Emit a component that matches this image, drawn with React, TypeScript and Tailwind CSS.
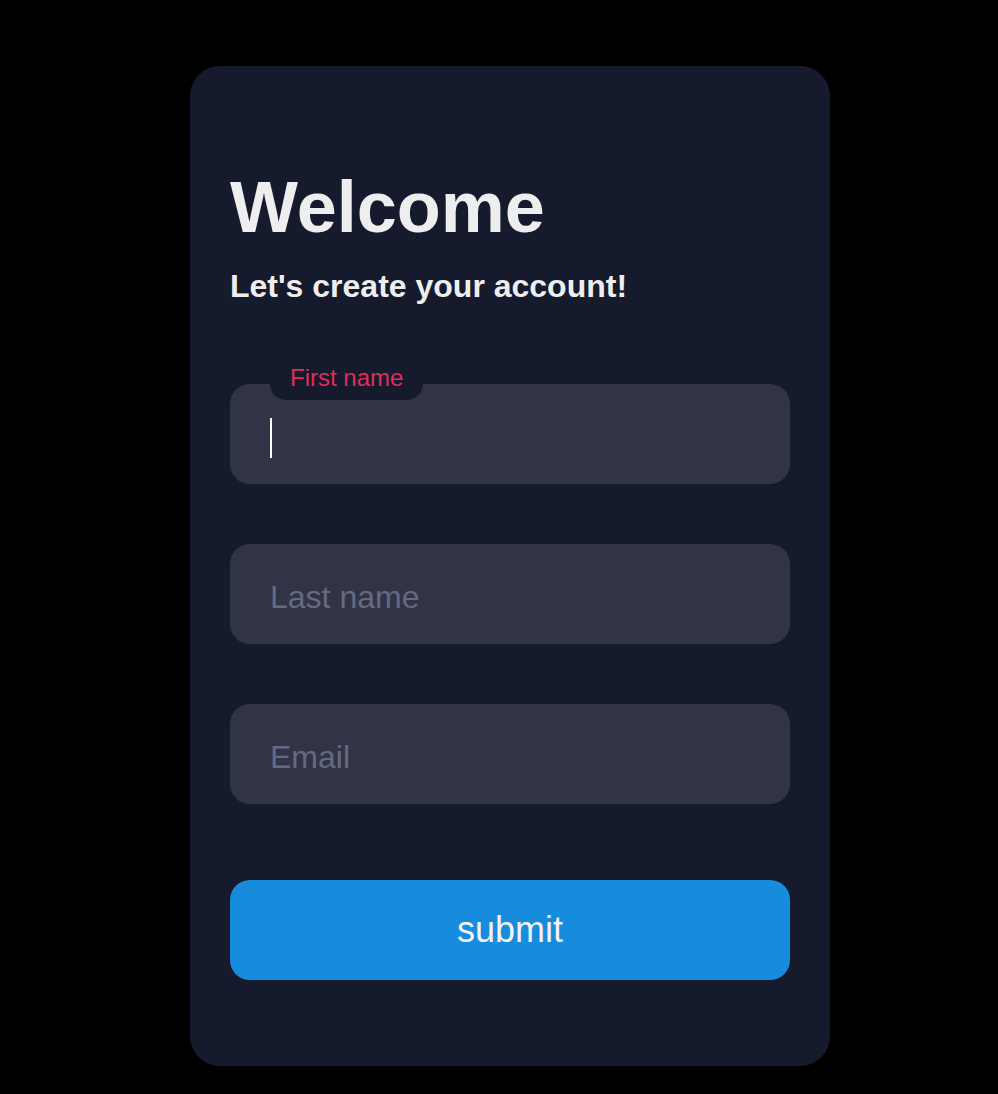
const fields = ["First name", "Last name", "Email"];

const Field = ({ label, active }: { label: string; active?: boolean }) => {
  return (
    <div className="relative h-[100px] w-full rounded-[20px] bg-[#313347]">
      {active && (
        <span className="absolute left-[40px] top-[-28px] rounded-[16px] bg-[#161a2d] px-5 py-2 text-[24px] leading-[28px] text-[#dc2f59]">
          {label}
        </span>
      )}
      <input
        className="h-full w-full bg-transparent px-10 pt-[6px] text-[32px] text-white outline-none placeholder:text-[#666981]"
        placeholder={active ? "" : label}
      />
      {active && <span className="absolute left-[40px] top-[34px] h-[40px] w-[2px] bg-white" />}
    </div>
  );
};

export default function App() {
  return (
    <div className="min-h-[1094px] bg-black pt-[66px]" style={{ fontFamily: '"Liberation Sans", Arial, sans-serif' }}>
      <div className="ml-[190px] flex h-[1000px] w-[640px] flex-col rounded-[30px] bg-[#161a2d] px-10 pt-[105px]">
        <h1 className="text-[72px] font-bold leading-none text-[#eeeeee]">Welcome</h1>
        <p className="mt-[27px] text-[32px] font-bold leading-none text-[#eeeeee]">Let's create your account!</p>
        <div className="mt-[82px] flex flex-col gap-[60px]">
          {fields.map((f, i) => (
            <Field key={f} label={f} active={i === 0} />
          ))}
        </div>
        <button className="mt-[76px] h-[100px] w-full rounded-[20px] bg-[#178bdc] text-[36px] text-[#f2f2f2]">
          submit
        </button>
      </div>
    </div>
  );
}
